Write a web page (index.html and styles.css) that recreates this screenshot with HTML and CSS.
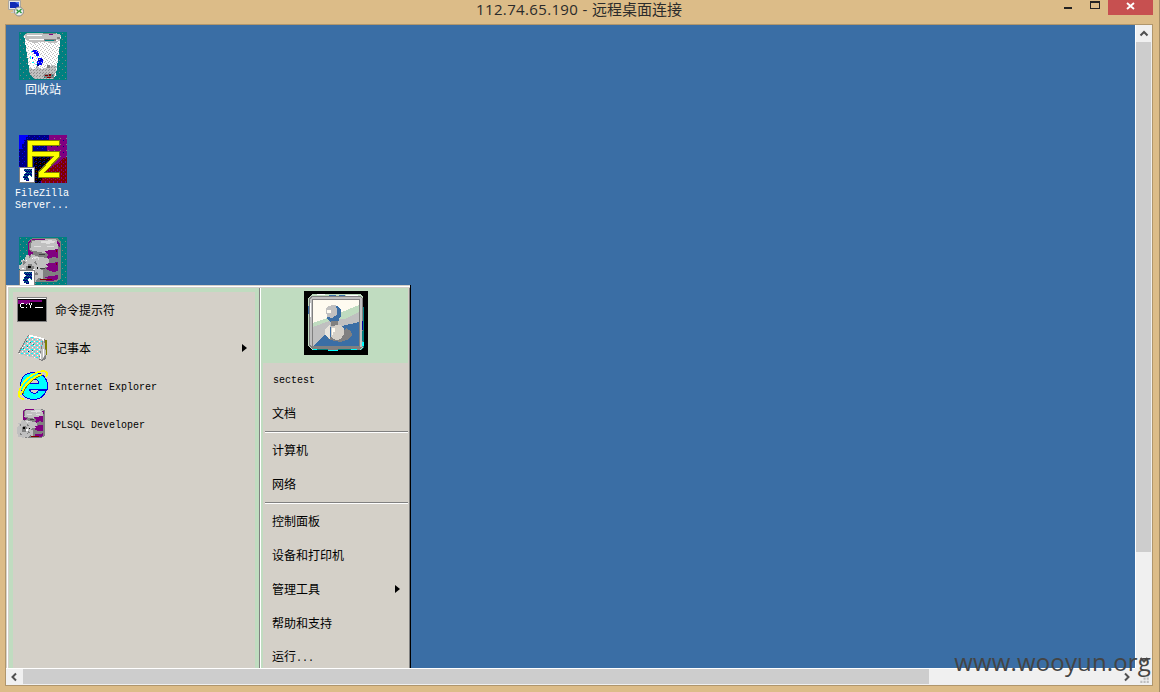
FILE: index.html
```html
<!DOCTYPE html>
<html lang="zh-CN">
<head>
<meta charset="utf-8">
<title>112.74.65.190 - 远程桌面连接</title>
<link rel="stylesheet" href="styles.css">
</head>
<body>
<svg class="defs" aria-hidden="true">
  <defs>
    <pattern id="teal" width="6" height="6" patternUnits="userSpaceOnUse"><path fill="#008080" d="M0 0h6v6H0z"/><path fill="#808080" d="M1 1h1v1H1zM4 4h1v1H4z"/></pattern>
    <pattern id="bin" width="4" height="4" patternUnits="userSpaceOnUse"><path fill="#fff" d="M0 0h4v4H0z"/><path fill="#c0c0c0" d="M0 0h1v1H0zM2 1h1v1H2zM1 2h1v1H1zM3 3h1v1H3z"/></pattern>
    <pattern id="binDark" width="3" height="3" patternUnits="userSpaceOnUse"><path fill="#c0c0c0" d="M0 0h3v3H0z"/><path fill="#909090" d="M0 1h1v1H0zM2 2h1v1H2z"/></pattern>
    <pattern id="navy" width="5" height="5" patternUnits="userSpaceOnUse"><path fill="#000080" d="M0 0h5v5H0z"/><path fill="#0000ff" d="M0 1h1v1H0zM3 3h1v1H3z"/></pattern>
    <pattern id="plum" width="6" height="6" patternUnits="userSpaceOnUse"><path fill="#800080" d="M0 0h6v6H0z"/><path fill="#808080" d="M5 3h1v1H5z"/><path fill="#000080" d="M2 5h1v1H2z"/></pattern>
    <pattern id="maroon" width="4" height="4" patternUnits="userSpaceOnUse"><path fill="#800000" d="M0 0h4v4H0z"/><path fill="#800080" d="M0 0h1v1H0zM2 2h1v2H2z"/></pattern>
    <pattern id="dusk" width="4" height="4" patternUnits="userSpaceOnUse"><path d="M0 0h4v4H0z"/><path fill="#800000" d="M1 0h1v1H1z"/><path fill="#000080" d="M0 2h2v1H0zM3 3h1v1H3z"/></pattern>
    <pattern id="paper" width="5" height="4" patternUnits="userSpaceOnUse"><path fill="#c0c0c0" d="M0 0h5v4H0z"/><path fill="#0ff" d="M0 1h2v1H0zM3 3h1v1H3z"/><path fill="#fff" d="M3 1h1v1H3zM1 3h1v1H1z"/></pattern>
    <pattern id="arrowInk" width="2" height="3" patternUnits="userSpaceOnUse"><path fill="#000080" d="M0 0h2v3H0z"/><path fill="#008080" d="M0 0h1v1H0zM1 2h1v1H1z"/></pattern>
    <symbol id="shortcut" viewBox="0 0 16 16">
      <path fill="#fff" stroke="#808080" d="M.5.5h15v15H.5z"/>
      <path fill="url(#arrowInk)" d="M5 2h8v8h-1V9h-1V8h-1v1H9v2h1v3H7v-1H5v-2H4V9h1V7h1V6h1V5H6V4H5z"/>
    </symbol>
    <symbol id="database" viewBox="0 0 48 48">
      <path fill="#808080" d="M14 1h24l4 3v38l-5 3H14l-5-3V4z"/>
      <path fill="#c0c0c0" d="M13 4l10-2h13l4 3-1 8-14 3-14-3zM12 17l8 3 10 1v9l-9 1-9-4zM15 31l9 2v9l-8-2z"/>
      <path fill="#800080" d="M9 5l3-3v2l-2 2v7l5 3-5 3v10l4 3-4-1zM25 14l14-2v9l-5-1-5 2-2-2 2-2zM26 27l13-2v9l-5 1-6-2-2-2 3-1zM25 40l14-2v4l-5 2h-8l3-2zM12 2h14v1H13zM38 4l3 2v5l-2-2z"/>
      <path fill="#dfdfdf" d="M19 5l13-2 5 2-8 2zM14 20h6v3h-6zM15 9h7v1h-7zM28 9h7v1h-7z"/>
      <path fill="#404040" d="M20 17h6v1h-6zM21 31h5v1h-5z"/>
      <path fill="#800000" d="M37 13h1v2h-1zM37 26h1v2h-1zM21 42h12v1H21z"/>
      <path fill="#c0c0c0" d="M7 18h3v3l3-2 2 3 4-1v5l4 2-2 4 3 2-3 3 1 3-4 2-1 3-5-2-3 3-3-3-4 1v-5l-4-2 3-4-2-4 4-2-1-4h4z"/>
      <path fill="#808080" d="M4 24l3 1-3 3zM17 24l1 4-4-3zM17 35l3 2-5 2zM4 36l4 4H4zM7 29h2v-2h4v2h2v5h-2v2H8v-2H7z"/>
      <path fill="#000" d="M9 29h3v2H9zM18 30h1v2h-1z"/><path fill="#fff" d="M4 22h1v1H4zM13 21h1v1h-1zM14 32h2v2h-2zM7 23h1v1H7zM3 31h2v1H3z"/>
    </symbol>
  </defs>
</svg>

<div class="window">
  <header class="titlebar">
    <svg class="app-icon" viewBox="0 0 16 17">
      <path fill="#e8e8e8" stroke="#aaa69d" d="M.5.5h12v9H.5z"/><path fill="#102bb5" d="M2 2h9v6H2z"/><path fill="#4b73e8" d="M7 2h4v3z"/><path fill="#c8c8c8" d="M5 10h4v2h2v1H3v-1h2z"/>
      <circle cx="11" cy="11.5" r="4.5" fill="#eee" stroke="#888"/><path d="M8.500 9.500l2 2-2 2M13.500 9l-2 2 2 2" fill="none" stroke="#279735" stroke-width="1.3"/>
    </svg>
    <h1 class="title"><span class="title-host">112.74.65.190 - </span>远程桌面连接</h1>
    <div class="controls">
      <svg class="minmax" viewBox="0 0 52 15" shape-rendering="crispEdges"><path fill="#222" d="M8 7h8v2H8z"/><path fill="none" stroke="#222" d="M34.5 1.5h9v7h-9z"/><path fill="#222" d="M34 1h10v2H34z"/></svg>
      <div class="close"><svg width="9" height="8" viewBox="0 0 9 8"><path d="M1 1l7 6M8 1L1 7" fill="none" stroke="#fff" stroke-width="1.9"/></svg></div>
    </div>
  </header>

  <main class="client">
    <section class="desktop">
      <div class="shortcut">
        <svg class="shortcut-icon" viewBox="0 0 48 48" shape-rendering="crispEdges">
          <path fill="url(#teal)" d="M0 0h48v48H0z"/>
          <path fill="url(#bin)" d="M5 3l4-2h28l5 2-1 8-4 32-4 4H15l-4-4z"/>
          <path fill="#c0c0c0" d="M5 3l4-2h28l5 2-1 5-5 3-12-1-10 1-7-3z"/>
          <path fill="#fff" d="M8 3h15v1H8zM10 7h16v1H10zM34 8h5v1h-5zM10 13h1l3 22h-2z"/>
          <path fill="#808080" d="M24 1h13v1H24zM25 7h12v2H25zM38 5h3v2h-3z"/><path fill="#008080" d="M26 8h9v1h-9z"/><path fill="#800080" d="M30 2h4v1h-4z"/>
          <path fill="url(#binDark)" d="M10 36l5 1 3-3 5 3 10-4 5 1-2 9-4 4H15l-4-4z"/>
          <path fill="#00f" d="M14 18h4v1h1v2h1v3h-3v-2h-2v-2h-2zM13 25h1v2h-1zM19 26h4v2h1v3h-1v2h-3v1h-2v-5h1z"/>
          <path fill="#000080" d="M19 28h3v1h-3zM18 32h2v2h-2zM22 27h2v1h-2z"/><path fill="#0ff" d="M12 19h1v1h-1zM11 24h1v3h-1zM13 30h2v1h-2zM17 32h1v1h-1zM18 24h1v1h-1z"/><path fill="#c0c0c0" d="M17 19h1v1h-1zM20 27h1v1h-1zM19 30h1v1h-1zM22 30h1v1h-1z"/>
          <path fill="#808080" d="M28 33h3v3h-3zM25 42h10v4H25z"/><path fill="#800000" d="M26 43h3v1h-3zM30 42h2v2h-2zM28 45h4v1h-4z"/><path fill="#008080" d="M25 45h1v1h-1zM33 43h1v1h-1z"/>
        </svg>
        <span class="shortcut-label cjk">回收站</span>
      </div>
      <div class="shortcut">
        <svg class="shortcut-icon" viewBox="0 0 48 48" shape-rendering="crispEdges">
          <path fill="url(#navy)" d="M0 0h30v48H0z"/><path fill="#00f" d="M0 0h9v2H7v3H5v4H3v5H0z"/>
          <path fill="url(#plum)" d="M30 0h18v48H24V20h4V8h2z"/><path fill="url(#maroon)" d="M36 30l4-2 3-4 5-2v26H22V38z"/><path fill="url(#dusk)" d="M15 22h16v8L21 48h-6z"/>
          <path fill="#808000" d="M8 5h33v6H14v5h27v6L26 37h15v6H19v-6l14-15H14v12H8z"/>
          <path fill="#ff0" d="M9 6h31v4H13v7h27v4L25 38h15v4H20v-4l15-17H13v12H9z"/>
          <use href="#shortcut" x="0" y="32" width="16" height="16"/>
        </svg>
        <span class="shortcut-label">FileZilla<br>Server...</span>
      </div>
      <div class="shortcut">
        <svg class="shortcut-icon" viewBox="0 0 48 48" shape-rendering="crispEdges">
          <path fill="url(#teal)" d="M0 0h48v48H0z"/><use href="#database" width="48" height="48"/><use href="#shortcut" x="0" y="33" width="16" height="16"/>
        </svg>
      </div>

      <div class="start-menu">
        <ul class="programs">
          <li class="program">
            <svg class="program-icon" viewBox="0 0 32 32" shape-rendering="crispEdges"><path fill="#808080" d="M1 3h30v25H1z"/><path d="M2 4h28v23H2z"/><path fill="#fff" d="M2 4h28v1H2z"/><path fill="url(#plum)" d="M2 6h24v2H14v2H2z"/><path fill="#fff" d="M5 9h3v1H5zM4 10h1v3H4zM5 13h3v1H5zM10 10h1v1h-1zM10 13h1v1h-1zM13 9h1v2h-1zM14 11h1v3h-1zM15 9h1v2h-1zM19 13h8v1h-8z"/></svg>
            <span class="cjk">命令提示符</span>
          </li>
          <li class="program">
            <svg class="program-icon" viewBox="0 0 32 32" shape-rendering="crispEdges"><path fill="#808000" d="M28 8h3v15h-3z"/><path fill="#808080" d="M12 3l17 4 1 20-4 2-5-3-19-5z"/><path fill="url(#paper)" d="M12 4l15 3-4 20-20-5z"/><path fill="#c0c0c0" d="M28 7l2 15-4 6-3-1z"/><path fill="#fff" d="M13 3h4v1h4v1h4v1h3v3h-1V7h-4V6h-4V5h-6zM27 17h1v8h-1zM24 22h1v5h-1z"/><path fill="#008080" d="M10 9h1v1h-1zM14 10h1v1h-1zM11 14h1v1h-1zM17 12h1v1h-1zM7 16h1v1H7zM16 18h1v1h-1z"/><path fill="#000080" d="M12 19h1v1h-1z"/></svg>
            <span class="cjk">记事本</span>
            <i class="arrow"></i>
          </li>
          <li class="program">
            <svg class="program-icon" viewBox="0 0 32 32" shape-rendering="crispEdges"><path fill="#0ff" stroke="#0000e0" fill-rule="evenodd" d="M18 2.500C26 2.500 31.500 8 31.500 16v3h-18c1 5 7 6 9 1.500h8C28 26 24 29.500 18 29.500 8 29.500 4.500 23 4.500 16S8 2.500 18 2.500zM13 13.500h10c-1-6-9-6-10 0z"/><path fill="none" stroke="#808000" d="M7 24C9 16 17 8 26 5"/><path fill="none" stroke="#ff0" stroke-width="1.800" d="M8 29c-4 0-6-2-5-7C5 12 17 2 27 1c4 0 5 2 3 6M5 25C7 16 16 7 26 4"/></svg>
            <span class="latin">Internet Explorer</span>
          </li>
          <li class="program">
            <svg class="program-icon" viewBox="0 0 32 32" shape-rendering="crispEdges"><use href="#database" x="1" width="32" height="32"/></svg>
            <span class="latin">PLSQL Developer</span>
          </li>
        </ul>

        <div class="places">
          <div class="user-tile">
            <svg class="avatar" viewBox="0 0 64 64" shape-rendering="crispEdges">
              <path d="M0 0h64v64H0z"/><path fill="#008080" d="M5 20h1l2 39h49l3-3V16h-3V6H7z"/><path fill="#c0dcc0" d="M8 3h48l3 3v50l-3 3H8l-4-4V7z"/><path fill="#808080" d="M7 5h49l3 3v47l-4 4H9l-4-4V7z"/><path fill="#c0c0c0" d="M8 6h48l2 2v48H8l-2-2V8z"/>
              <path fill="#fff" d="M13 3h8v1h-8zM42 4h12v1H42zM6 12h1v14H6z"/><path fill="#3a6ea5" d="M25 4h7v1h-7zM35 4h6v1h-6zM4 15h1v8H4z"/><path fill="#0ff" d="M9 58h4v1H9zM24 59h10v1H24zM47 58h6v1h-6zM58 51h2v4h-2z"/><path fill="#008080" d="M58 40h2v10h-2zM13 58h11v1H13zM34 58h13v1H34z"/><path fill="#0000a0" d="M58 30h1v9h-1z"/>
              <path fill="#fffbf0" stroke="#808080" d="M8.500 8.500h47v47h-47z"/>
              <path fill="#c0dcc0" d="M9 32l20-7 16-7 10-4v11L9 42z"/><path fill="#c0c0c0" d="M9 36l19-7 13-1 14-7v11L9 55z"/><path fill="#3a6ea5" d="M34 36l21-5v24H9l11-11z"/>
              <path fill="#808080" d="M42 37l5 3 1 4-3 4-8 3-7-1-7-3 11-2z"/>
              <path fill="#3a6ea5" d="M23 22l4-2 9 4-1 6-7 2-4-3z"/><path fill="#c0c0c0" d="M22 18l2-3 5-1 5 1 2 3-3 6-5 3h-5z"/><path fill="#3a6ea5" d="M32 15h2l3 4v6l-3 4-5 2-5-2-1-3 6 1 4-3v-5z"/><path fill="#fffbf0" d="M23 19h4v3h-4z"/><path fill="#808080" d="M27 30h7v5h-7z"/>
              <path fill="#d4d0c8" d="M26 38l6-4h5l3 4v5l-3 5-5 1-5-3z"/><path fill="#e8e4dc" d="M21 38l5-4v14l-5-4z"/><path fill="#fffbf0" d="M28 37h3v4h-2v3h-1z"/><path fill="#3a6ea5" d="M26 36h1v9h-1z"/>
            </svg>
          </div>
          <ul class="place-list">
            <li class="place"><span class="latin">sectest</span></li>
            <li class="place"><span class="cjk">文档</span></li>
            <li class="divider"></li>
            <li class="place"><span class="cjk">计算机</span></li>
            <li class="place"><span class="cjk">网络</span></li>
            <li class="divider"></li>
            <li class="place"><span class="cjk">控制面板</span></li>
            <li class="place"><span class="cjk">设备和打印机</span></li>
            <li class="place"><span class="cjk">管理工具</span><i class="arrow"></i></li>
            <li class="place"><span class="cjk">帮助和支持</span></li>
            <li class="place"><span class="cjk">运行<span class="dots">...</span></span></li>
          </ul>
        </div>
      </div>
    </section>

    <div class="scroll-v">
      <svg class="chevron" viewBox="0 0 16 16"><path d="M4.500 10.500L8 7l3.500 3.500"/></svg>
      <div class="thumb-v"></div>
      <svg class="chevron chevron-down" viewBox="0 0 16 16"><path d="M4.500 6L8 9.500 11.500 6"/></svg>
    </div>
    <div class="scroll-h">
      <svg class="chevron" viewBox="0 0 16 16"><path d="M10 4.500L6.500 8l3.500 3.500"/></svg>
      <div class="thumb-h"></div>
      <svg class="chevron chevron-right" viewBox="0 0 16 16"><path d="M6 4.500L9.500 8 6 11.500"/></svg>
    </div>
    <svg class="grip" viewBox="0 0 16 16"><path fill="#bdbdbd" d="M11 6h2v2h-2zM8 9h2v2H8zM11 9h2v2h-2zM5 12h2v2H5zM8 12h2v2H8zM11 12h2v2h-2z"/></svg>
  </main>
  <div class="watermark">www.wooyun.org</div>
</div>
</body>
</html>
```
FILE: styles.css
```css
* { box-sizing: border-box; }

body { margin: 0; overflow: hidden; }

ul { list-style: none; margin: 0; padding: 0; }

svg { display: block; flex: none; }

.defs { position: absolute; width: 0; height: 0; }

.window {
  position: relative;
  display: flex;
  flex-direction: column;
  width: 1160px;
  height: 692px;
  padding: 0 7px 6px 5px;
  background: #dcbc88;
  box-shadow: inset -1px 0 #a58d66;
}

.titlebar {
  display: grid;
  grid-template-columns: 103px 1fr 103px;
  height: 24px;
}

.app-icon { width: 16px; height: 17px; margin-left: 3px; }

.title {
  margin: 0;
  font: 15px/18px "Open Sans", "Noto Sans CJK SC", sans-serif;
  color: #2b2b2b;
  text-align: center;
  white-space: pre;
}

.title-host { letter-spacing: 0.35px; }

.controls { display: flex; justify-content: flex-end; }

.minmax { width: 52px; height: 15px; }

.close {
  display: flex;
  justify-content: center;
  width: 45px;
  height: 15px;
  padding-top: 2px;
  background: #c75050;
}

.client {
  display: grid;
  grid-template-columns: 1129px 17px;
  grid-template-rows: 643px 17px;
  width: 1148px;
  height: 662px;
  border: 1px solid #b0966c;
}

.desktop {
  position: relative;
  overflow: hidden;
  padding-top: 7px;
  background: #3a6ea5;
  font: 10px/12px "Liberation Mono", monospace;
  color: #fff;
}

.cjk { padding-bottom: 2px; font: 12px/12px "Noto Sans CJK SC", sans-serif; }

.latin { padding-top: 2px; }

.shortcut { width: 75px; height: 103px; }

.shortcut:nth-child(2) { height: 102px; }

.shortcut-icon { width: 48px; height: 48px; margin-left: 13px; }

.shortcut-label { display: block; padding: 5px 0 0 9px; white-space: nowrap; }

.shortcut-label.cjk { padding: 3px 0 0 19px; }

.start-menu {
  position: absolute;
  left: 0;
  top: 260px;
  display: flex;
  width: 405px;
  height: 400px;
  padding: 3px 0 0 3px;
  background: #c0dcc0;
  border-right: 1px solid #000;
  box-shadow: inset 1px 1px #d4d0c8, inset 2px 2px #fff, inset 3px 3px #d4d0c8, inset -1px 0 #808080, inset -2px 0 #d4d0c8;
  color: #000;
}

.programs {
  width: 242px;
  margin: 4px 4px 0;
  background: #d4d0c8;
}

.program {
  display: flex;
  align-items: center;
  height: 38px;
  padding: 0 8px 0 3px;
}

.program-icon { width: 32px; height: 32px; margin: 0 7px 2px 0; }

.arrow {
  width: 0;
  height: 0;
  margin: 0 0 2px auto;
  border: solid transparent;
  border-width: 4px 0 4px 5px;
  border-left-color: #000;
}

.places {
  flex: 1;
  border-left: 1px solid #808080;
  margin-right: 2px;
  box-shadow: inset 1px 0 #fff;
  padding-left: 3px;
}

.user-tile { display: flex; height: 75px; padding: 3px 0 0 41px; }

.avatar { width: 64px; height: 64px; }

.place-list { height: 325px; background: #d4d0c8; }

.place {
  display: flex;
  align-items: center;
  height: 34px;
  padding: 0 8px 0 9px;
}

.place .latin { padding-left: 1px; }

.dots { font: 10px/12px "Liberation Mono", monospace; }

.divider {
  height: 2px;
  margin: 0 0 1px 2px;
  border-top: 1px solid #808080;
  border-bottom: 1px solid #fff;
}

.scroll-v, .scroll-h { display: flex; background: #f0f0f0; }

.scroll-v { flex-direction: column; border-left: 1px solid #fff; }

.scroll-h { border-top: 1px solid #fff; }

.chevron { width: 16px; height: 16px; fill: none; stroke: #505050; stroke-width: 2; }

.thumb-v { width: 15px; height: 510px; margin-top: 1px; background: #cdcdcd; }

.thumb-h { width: 906px; height: 15px; margin-left: 1px; background: #cdcdcd; }

.chevron-down, .chevron-right { margin: auto 0 0; }

.chevron-right { margin: 0 0 0 auto; }

.grip { width: 17px; height: 17px; background: #f0f0f0; }

.watermark {
  position: absolute;
  right: 9px;
  bottom: 13px;
  font: 24px/34px "Open Sans", sans-serif;
  letter-spacing: 0.15px;
  color: #444;
}
```
